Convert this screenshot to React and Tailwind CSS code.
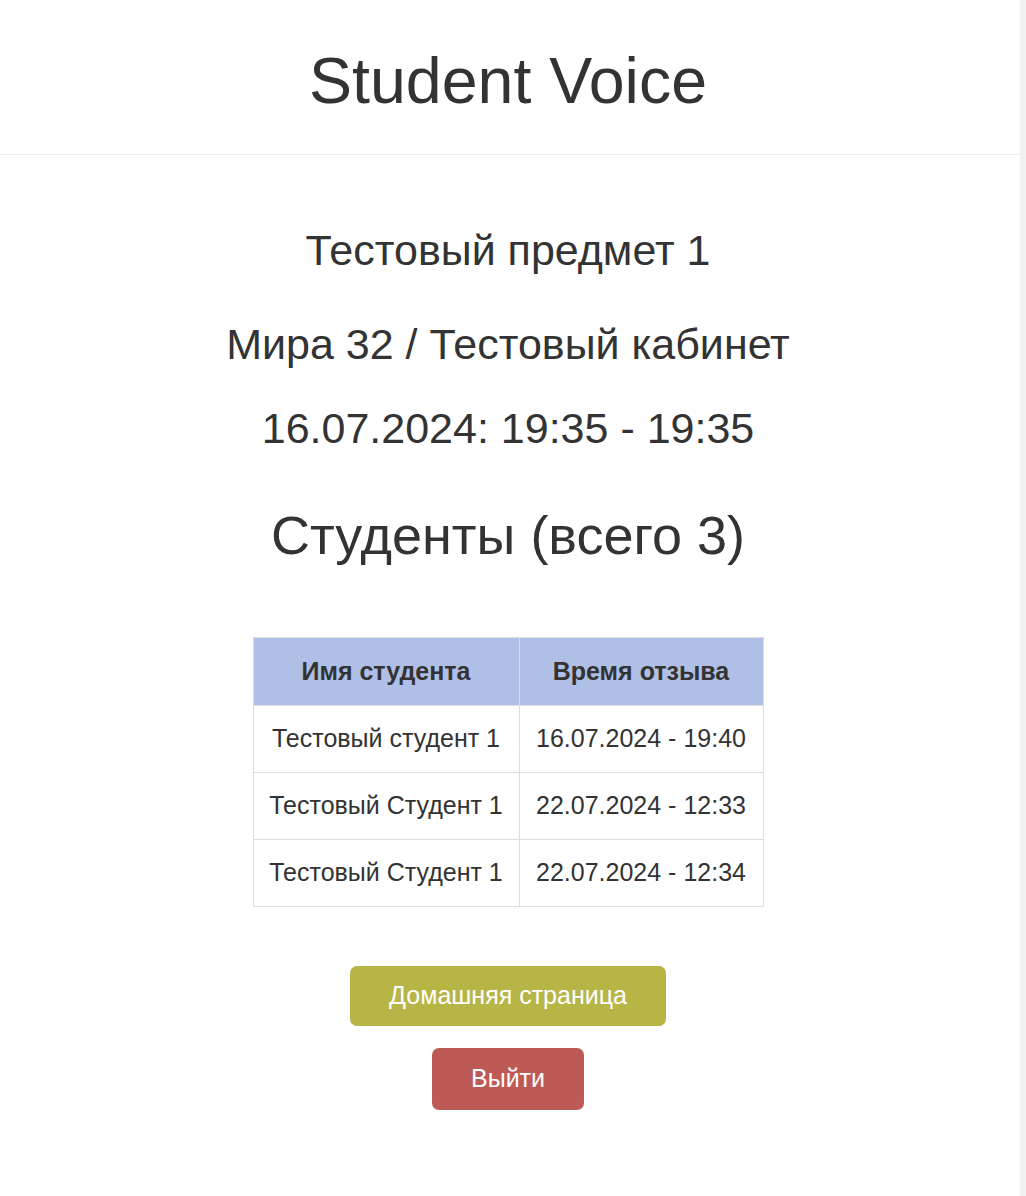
const students = [
    { name: "Тестовый студент 1", time: "16.07.2024 - 19:40" },
    { name: "Тестовый Студент 1", time: "22.07.2024 - 12:33" },
    { name: "Тестовый Студент 1", time: "22.07.2024 - 12:34" },
];

const App = () => {
    return (
        <div className="min-h-screen flex bg-white text-[#333] font-[family-name:Liberation_Sans,Arial,sans-serif]">
            <div className="flex-1">
                {/* Header */}
                <header className="h-[155px] border-b border-[#eeeeee] pt-[46px] pr-[4px]">
                    <h1 className="text-center text-[64.5px] leading-[70px]">Student Voice</h1>
                </header>

                <main className="flex flex-col items-center pr-[4px]">
                    {/* Lesson info */}
                    <h3 className="mt-[72px] text-[43px] leading-[46px]">Тестовый предмет 1</h3>
                    <h3 className="mt-[48px] text-[43px] leading-[46px]">Мира 32 / Тестовый кабинет</h3>
                    <h3 className="mt-[38px] text-[43px] leading-[46px]">16.07.2024: 19:35 - 19:35</h3>

                    <h2 className="mt-[55px] text-[54px] leading-[58px]">Студенты (всего 3)</h2>

                    {/* Students table */}
                    <table className="mt-[73px] border-collapse border border-[#dddddd] text-[25px]">
                        <thead>
                            <tr className="bg-[#b0bfe6] h-[68px]">
                                <th className="w-[266px] border border-[#dddddd] font-bold">Имя студента</th>
                                <th className="w-[244px] border border-[#dddddd] font-bold">Время отзыва</th>
                            </tr>
                        </thead>
                        <tbody>
                            {students.map((s, i) => (
                                <tr key={i} className="h-[67px]">
                                    <td className="border border-[#dddddd] text-center">{s.name}</td>
                                    <td className="border border-[#dddddd] text-center">{s.time}</td>
                                </tr>
                            ))}
                        </tbody>
                    </table>

                    {/* Actions */}
                    <button className="mt-[59px] w-[316px] h-[60px] rounded-[7px] bg-[#b8b547] text-white text-[25px]">
                        Домашняя страница
                    </button>
                    <button className="mt-[22px] w-[152px] h-[62px] rounded-[7px] bg-[#bd5a56] text-white text-[25px]">
                        Выйти
                    </button>
                </main>
            </div>
            {/* scrollbar track */}
            <div className="w-[6px] bg-[#f1f1f1]" />
        </div>
    );
};

export default App;
